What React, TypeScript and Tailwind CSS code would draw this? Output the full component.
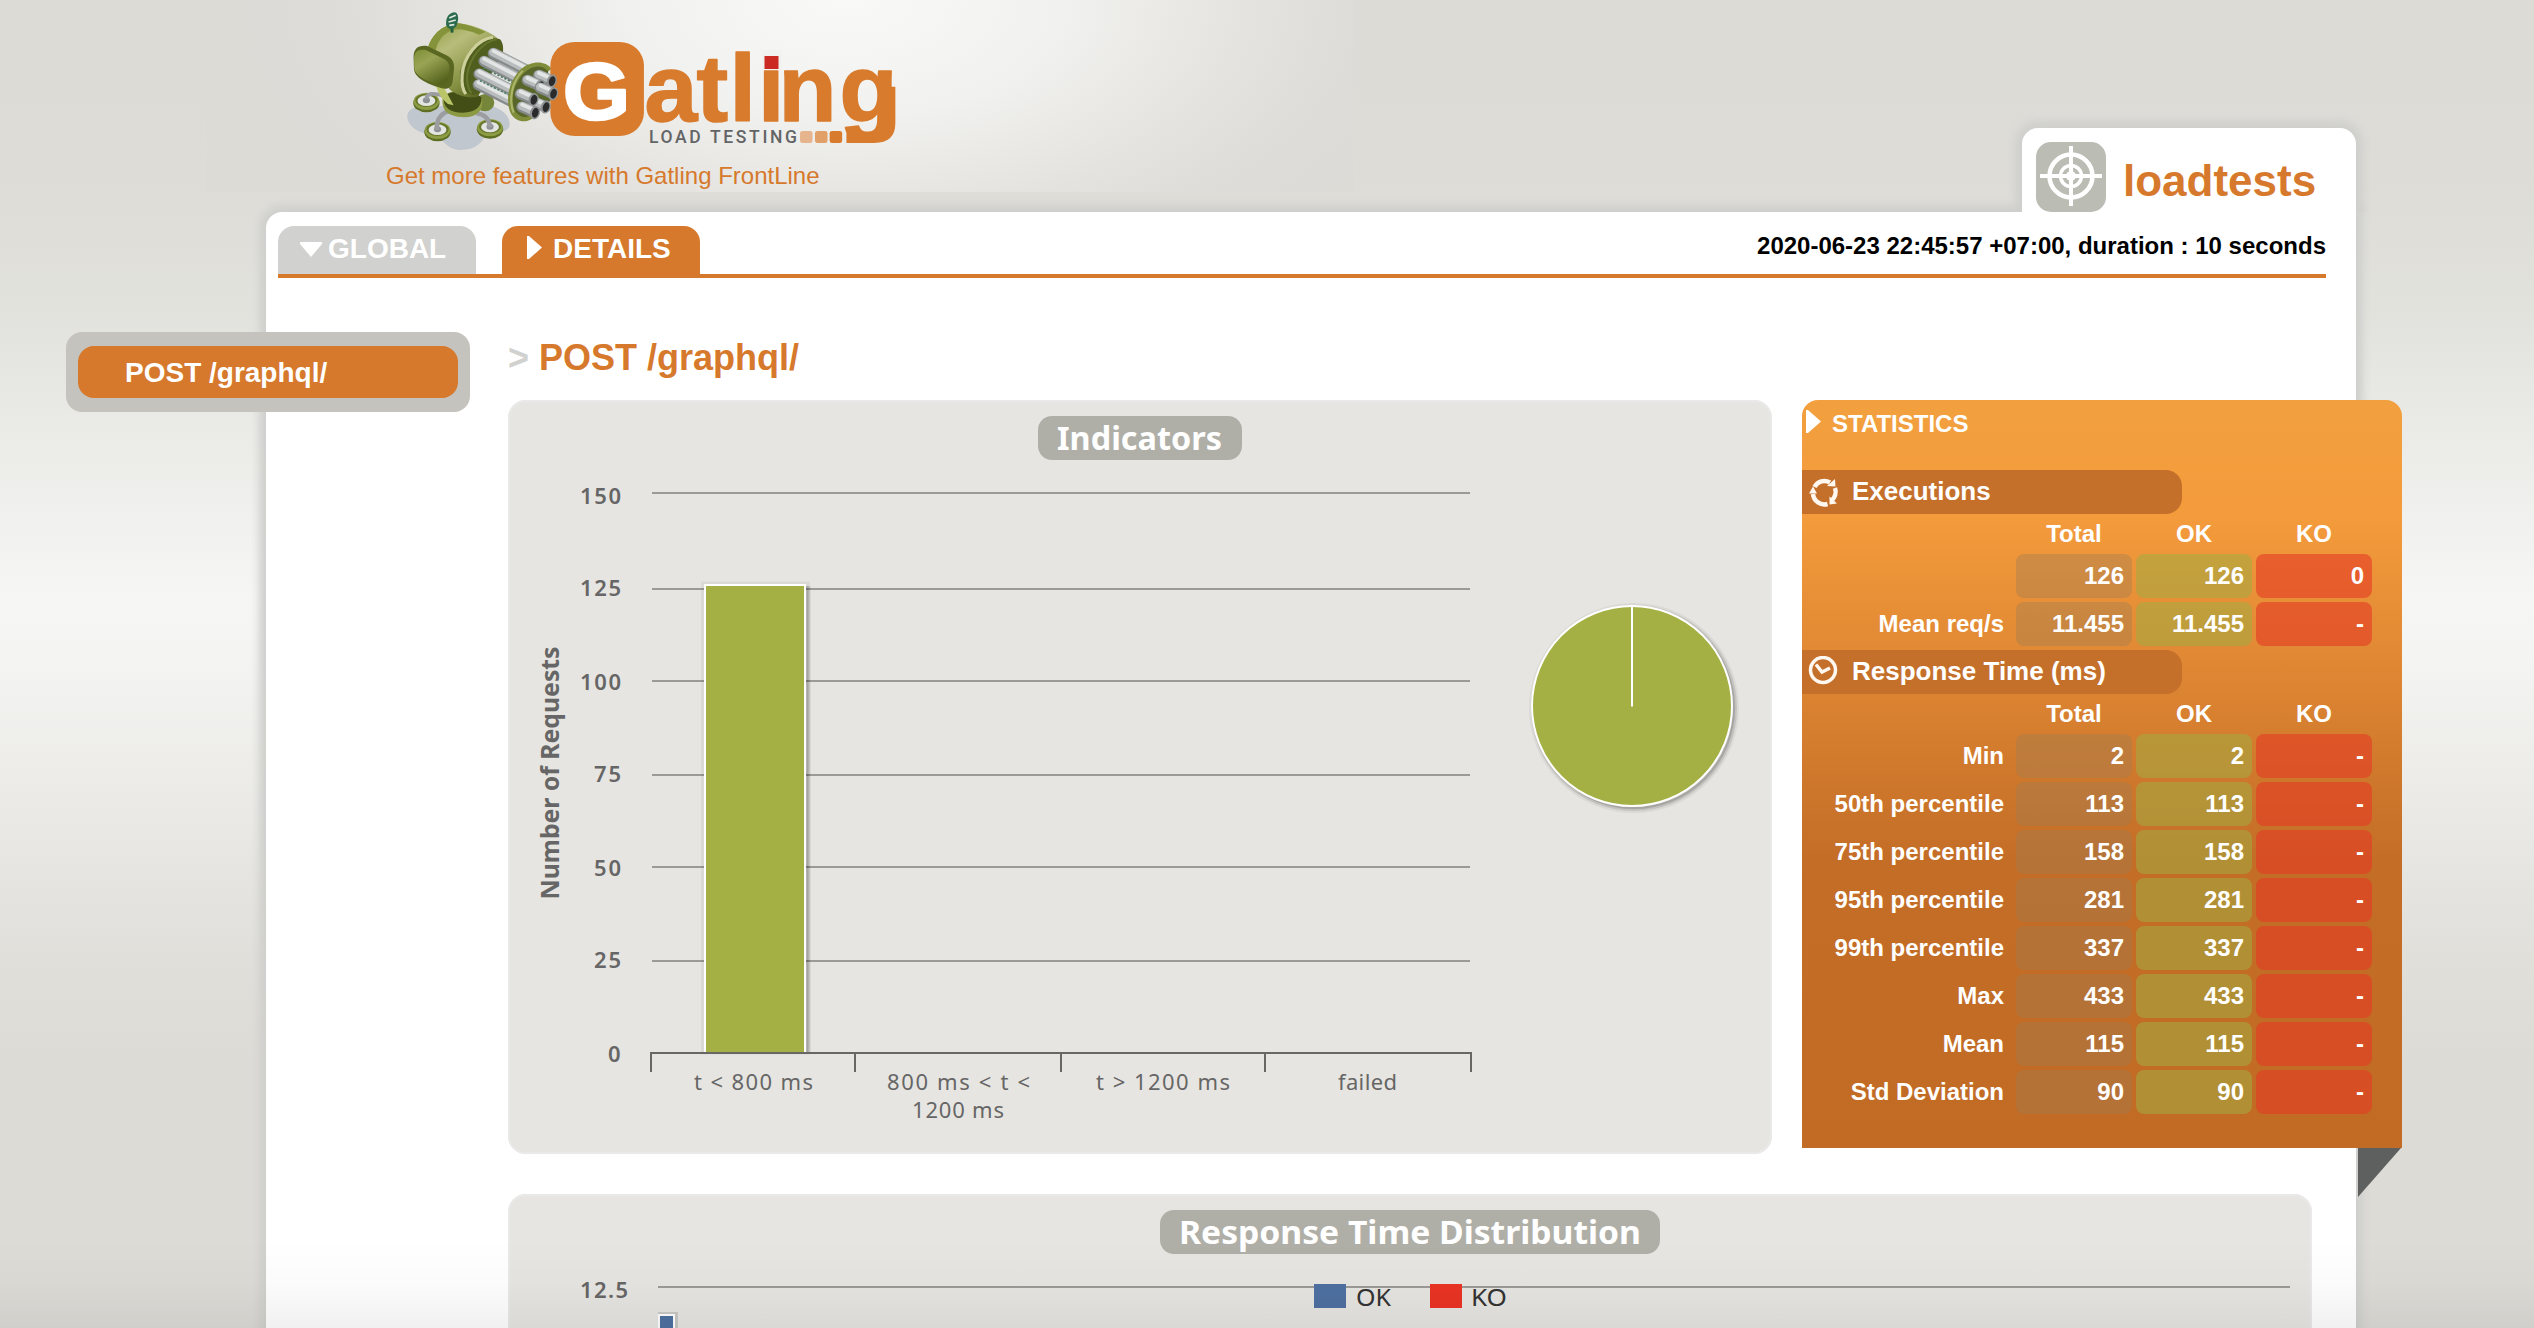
import React from "react";

type Row = { label: string; values: [string, string, string] };

const executions: Row[] = [
  { label: "", values: ["126", "126", "0"] },
  { label: "Mean req/s", values: ["11.455", "11.455", "-"] },
];

const responseTimes: Row[] = [
  { label: "Min", values: ["2", "2", "-"] },
  { label: "50th percentile", values: ["113", "113", "-"] },
  { label: "75th percentile", values: ["158", "158", "-"] },
  { label: "95th percentile", values: ["281", "281", "-"] },
  { label: "99th percentile", values: ["337", "337", "-"] },
  { label: "Max", values: ["433", "433", "-"] },
  { label: "Mean", values: ["115", "115", "-"] },
  { label: "Std Deviation", values: ["90", "90", "-"] },
];

function Foot({ x, y }: { x: number; y: number }) {
  return (
    <g>
      <ellipse cx={x} cy={y + 8} rx="37" ry="28" fill="#5e6f23" />
      <ellipse cx={x} cy={y + 3} rx="36" ry="26" fill="#8d9d45" />
      <ellipse cx={x} cy={y} rx="31" ry="20" fill="#66772a" />
      <ellipse cx={x} cy={y + 1} rx="25" ry="16" fill="#e3e5e2" />
      <ellipse cx={x} cy={y} rx="10" ry="9" fill="#8b9095" />
    </g>
  );
}

function Barrel({ x1, y1, x2, y2 }: { x1: number; y1: number; x2: number; y2: number }) {
  return (
    <g strokeLinecap="round">
      <line x1={x1} y1={y1} x2={x2} y2={y2} stroke="#858989" strokeWidth="33" />
      <line x1={x1} y1={y1 - 3} x2={x2} y2={y2 - 3} stroke="#b9bcbc" strokeWidth="25" />
      <line x1={x1} y1={y1 - 7} x2={x2} y2={y2 - 7} stroke="#e3e5e5" strokeWidth="11" />
    </g>
  );
}

function Muzzle({ x, y }: { x: number; y: number }) {
  return (
    <g>
      <Barrel x1={x - 36} y1={y - 17} x2={x - 4} y2={y - 2} />
      <ellipse cx={x} cy={y} rx="14" ry="20" fill="#8f9393" transform={`rotate(14 ${x} ${y})`} />
      <ellipse cx={x + 1} cy={y} rx="9" ry="15" fill="#2b2b2b" transform={`rotate(14 ${x} ${y})`} />
    </g>
  );
}

function GatlingLogo() {
  return (
    <svg className="block h-[156px] w-[560px]" viewBox="0 0 560 156">
      <defs>
        <linearGradient id="drum" x1="0" y1="0" x2="0.7" y2="1">
          <stop offset="0" stopColor="#8a9a3f" />
          <stop offset="0.35" stopColor="#b9bd7b" />
          <stop offset="0.75" stopColor="#838f40" />
          <stop offset="1" stopColor="#56621f" />
        </linearGradient>
        <linearGradient id="shield" x1="0" y1="0" x2="0.6" y2="1">
          <stop offset="0" stopColor="#7c8e36" />
          <stop offset="0.4" stopColor="#9aa454" />
          <stop offset="1" stopColor="#56641d" />
        </linearGradient>
      </defs>
      <g transform="scale(0.35714 0.33333)">
        <path d="M132 352C132 322 165 312 215 318L370 318C402 330 424 352 418 380C410 400 372 396 350 408C336 440 310 450 280 450C242 448 236 420 210 406C166 400 138 386 132 352Z" fill="#c1c7cf" />
        <ellipse cx="350" cy="308" rx="26" ry="26" fill="#75853a" />
        <Foot x={186} y={301} />
        <path d="M186 298C186 278 206 278 238 288" stroke="#9b9da0" strokeWidth="11" fill="none" />
        <Foot x={217} y={388} />
        <path d="M215 390C214 356 226 342 246 334" stroke="#9b9da0" strokeWidth="13" fill="none" />
        <Foot x={364} y={380} />
        <path d="M364 382C362 354 346 342 326 340" stroke="#9b9da0" strokeWidth="13" fill="none" />
        <path d="M232 292C226 330 244 350 290 352C330 350 346 332 342 296C320 270 250 262 232 292Z" fill="#8d9a44" />
        <path d="M234 290C232 322 252 338 288 338C322 338 342 320 340 292C316 272 256 266 234 290Z" fill="#434d16" />
        <path d="M190 145C198 112 226 72 276 70C330 76 372 100 392 122C404 142 396 166 380 190L330 290C304 296 276 290 250 268Z" fill="url(#drum)" />
        <path d="M190 145C198 112 226 72 276 70C300 74 330 84 352 96L334 104C310 94 290 88 272 88C240 92 220 116 212 150Z" fill="#85943a" />
        <path d="M392 118C350 104 300 138 282 210C274 250 286 280 318 286L340 276L400 160C402 140 400 128 392 118Z" fill="#515f1e" />
        <path d="M372 112C330 118 290 168 286 224C284 250 288 270 296 282" stroke="#ced09b" strokeWidth="9" fill="none" />
        <path d="M384 118C344 124 306 172 300 226C298 252 304 268 312 280" stroke="#66752b" strokeWidth="6" fill="none" />
        <path d="M212 255L236 264L262 316L246 312C226 294 218 276 212 255Z" fill="#bac468" />
        <path d="M150 170C150 146 164 134 188 138L242 166C260 176 265 190 263 210L259 246C256 264 244 270 226 264C184 250 151 232 151 204Z" fill="#596720" />
        <path d="M151 178C151 154 162 146 184 150L234 176C247 184 252 194 250 210L246 242C244 254 234 260 220 255C184 242 153 226 152 204Z" fill="url(#shield)" />
        <path d="M258 98L257 78" stroke="#22603e" strokeWidth="8" />
        <path d="M241 74C240 50 250 38 266 37C278 42 276 62 270 78C260 92 244 88 241 74Z" fill="#2b6b4b" />
        <path d="M250 54L268 46M248 66L268 60M250 76L264 74" stroke="#dfe8e0" strokeWidth="5" />
        <Barrel x1={374} y1={160} x2={468} y2={212} />
        <Barrel x1={348} y1={184} x2={450} y2={240} />
        <Barrel x1={334} y1={222} x2={434} y2={276} />
        <Barrel x1={332} y1={254} x2={430} y2={308} />
        <path d="M346 204L440 254M336 242L420 286" stroke="#4f7d68" strokeWidth="5" strokeDasharray="6 5" />
        <path d="M536 206C520 182 480 180 450 208C416 244 406 300 422 340C436 368 466 370 484 354L500 240Z" fill="#7f8d3a" />
        <path d="M526 212C508 192 480 196 458 220C428 256 420 300 434 334C448 356 470 356 488 340L536 300Z" fill="#59662a" />
        <path d="M456 212C424 246 416 300 430 338" stroke="#adb56b" strokeWidth="6" fill="none" />
        <rect x="533" y="126" width="262" height="282" rx="68" ry="70" fill="#d87b2d" />
        <Muzzle x={537} y={243} />
        <Muzzle x={505} y={258} />
        <Muzzle x={541} y={281} />
        <Muzzle x={520} y={321} />
        <Muzzle x={486} y={299} />
        <Muzzle x={490} y={338} />
        <rect x="1232" y="393" width="35" height="36" rx="7" fill="#e6b58e" />
        <rect x="1274" y="393" width="35" height="36" rx="7" fill="#e1a068" />
        <rect x="1315" y="393" width="35" height="36" rx="7" fill="#d87b2d" />
        <path d="M1362 412H1440C1470 412 1482 400 1482 370V260" stroke="#d87b2d" strokeWidth="34" fill="none" />
      </g>
      <text x="203" y="119" textLength="67" lengthAdjust="spacingAndGlyphs" fill="#ffffff" stroke="#ffffff" strokeWidth="2.500" strokeLinejoin="round" className="font-['Liberation_Sans'] text-[80px] font-bold">G</text>
      <text x="284.500 336.500 369.500 398 418.500 479.500" y="121" fill="#d87b2d" stroke="#d87b2d" strokeWidth="1.500" strokeLinejoin="round" className="font-['Liberation_Sans'] text-[95px] font-bold">atling</text>
      <rect x="402" y="50" width="19.500" height="19.500" fill="#f1f1ef" />
      <rect x="404.500" y="56" width="14" height="13" fill="#cb2a22" />
      <text x="289" y="143" textLength="148" lengthAdjust="spacing" fill="#636465" className="font-['Roboto'] text-[17.500px] font-medium">LOAD TESTING</text>
    </svg>
  );
}

function TargetIcon() {
  return (
    <svg className="size-[70px]" viewBox="0 0 70 70" fill="none" stroke="#ffffff">
      <rect width="70" height="70" rx="15" fill="#bbbcb4" stroke="none" />
      <circle cx="35" cy="34" r="21.500" strokeWidth="4.500" />
      <circle cx="35" cy="34" r="10.500" strokeWidth="3.500" />
      <path d="M35 4V64M4 34H66" strokeWidth="4" />
      <circle cx="35" cy="34" r="5" fill="#ffffff" stroke="none" />
    </svg>
  );
}

function CycleIcon() {
  return (
    <svg className="h-[32px] w-[32px]" viewBox="0 0 32 32" fill="none" stroke="#fff8f0" strokeWidth="4.500">
      <path d="M6.500 11A11 11 0 0 1 22 6.500" />
      <path d="M27 12A11.500 11.500 0 0 1 23.500 24.500" />
      <path d="M19.500 28A11.500 11.500 0 0 1 5 18" />
      <path d="M19 10L27.500 10.500L27 3Z" fill="#fff8f0" stroke="none" />
      <path d="M21.500 20.500L21.500 28.500L29 27.500Z" fill="#fff8f0" stroke="none" />
      <path d="M1 17.500L9 17.500L5 10.500Z" fill="#fff8f0" stroke="none" />
    </svg>
  );
}

function ClockIcon() {
  return (
    <svg className="h-[32px] w-[32px]" viewBox="0 0 32 32" fill="none" stroke="#fff8f0" strokeWidth="3.500">
      <circle cx="15" cy="14" r="12.500" />
      <path d="M8 8.500L14 16L22 12" />
    </svg>
  );
}

function SectionTitle({ icon, children }: { icon: React.ReactNode; children: React.ReactNode }) {
  return (
    <div className="flex h-[44px] w-[380px] items-center rounded-r-[16px] bg-[#c5702a] pl-[6px] text-[26px] leading-[42px]">
      {icon}
      <span className="-mt-0.5 ml-[12px]">{children}</span>
    </div>
  );
}

function StatsTable({ rows }: { rows: Row[] }) {
  return (
    <div className="flex flex-col gap-1 pb-1">
      <div className="-mb-1 flex h-[40px] gap-1 pl-[214px] text-center leading-[39px]">
        <span className="w-[116px]">Total</span>
        <span className="w-[116px]">OK</span>
        <span className="w-[116px]">KO</span>
      </div>
      {rows.map((row) => (
        <div key={row.label} className="flex h-[44px] gap-1 text-right leading-[44px]">
          <span className="w-[210px] pr-2">{row.label}</span>
          <span className="w-[116px] rounded-lg bg-[rgba(160,124,83,0.4)] pr-2">{row.values[0]}</span>
          <span className="w-[116px] rounded-lg bg-[rgba(164,170,65,0.57)] pr-2">{row.values[1]}</span>
          <span className="w-[116px] rounded-lg bg-[rgba(228,58,36,0.6)] pr-2">{row.values[2]}</span>
        </div>
      ))}
    </div>
  );
}

function Statistics() {
  return (
    <aside className="relative h-[748px] w-[600px] shrink-0 rounded-t-[16px] bg-[linear-gradient(180deg,#f2a03f_0px,#f49b3c_115px,#c36d27_460px,#c16b25_748px)] text-[24px] font-bold text-white">
      <div className="flex h-[70px] items-start pl-1 pt-[10px]">
        <svg className="h-[23px] w-[15px]" viewBox="0 0 15 23"><path d="M0 0H2L15 11.500L2 23H0Z" fill="#ffffff" /></svg>
        <span className="ml-[11px] leading-[28px]">STATISTICS</span>
      </div>
      <SectionTitle icon={<CycleIcon />}>Executions</SectionTitle>
      <StatsTable rows={executions} />
      <SectionTitle icon={<ClockIcon />}>Response Time (ms)</SectionTitle>
      <StatsTable rows={responseTimes} />
      <svg className="absolute left-[556px] top-[748px] h-[49px] w-[44px]" viewBox="0 0 44 49"><path d="M0 0H43L0 49Z" fill="#5d605f" /></svg>
    </aside>
  );
}

const gridLines = [
  { y: 93, base: 103.5, x: 72, w: 41, label: "150" },
  { y: 189, base: 195.500, x: 72, w: 41, label: "125" },
  { y: 281, base: 289.500, x: 72, w: 41, label: "100" },
  { y: 375, base: 381.500, x: 86, w: 27, label: "75" },
  { y: 467, base: 475.5, x: 86, w: 27, label: "50" },
  { y: 561, base: 567.500, x: 86, w: 27, label: "25" },
];

const categories = [
  { x: 186, w: 119, y: 690, label: "t < 800 ms" },
  { x: 379, w: 143, y: 690, label: "800 ms < t <" },
  { x: 404, w: 92, y: 718, label: "1200 ms" },
  { x: 588, w: 134, y: 690, label: "t > 1200 ms" },
  { x: 830, w: 59, y: 690, label: "failed" },
];

function IndicatorsChart() {
  return (
    <svg className="block h-[754px] w-[1264px] font-['Noto_Sans'] text-[22px]" viewBox="0 0 1264 754" fill="#666666">
      {gridLines.map((g) => (
        <g key={g.label}>
          <rect x="144" y={g.y - 1} width="818" height="2" fill="#9b9a99" />
          <text x={g.x} y={g.base} textLength={g.w} lengthAdjust="spacing" className="font-semibold">{g.label}</text>
        </g>
      ))}
      <text x="100" y="661.500" className="font-semibold">0</text>
      <rect x="195.500" y="184" width="104" height="468" fill="none" stroke="#000000" strokeOpacity="0.05" strokeWidth="5" />
      <path d="M299.500 186V652" stroke="#000000" strokeOpacity="0.1" strokeWidth="6" />
      <path d="M299.500 186V652" stroke="#000000" strokeOpacity="0.15" strokeWidth="2" />
      <rect x="196" y="184" width="102" height="468" fill="#ffffff" />
      <rect x="198" y="186" width="98" height="466" fill="#a4b043" />
      <path d="M142 653H964" stroke="#686766" strokeWidth="2" />
      <path d="M143 652V672M347 654V672M553 654V672M757 654V672M963 652V672" stroke="#686766" strokeWidth="2" />
      {categories.map((c) => (
        <text key={c.label} x={c.x} y={c.y} textLength={c.w} lengthAdjust="spacing">{c.label}</text>
      ))}
      <text transform="translate(50.500 499.500) rotate(-90)" textLength="253" lengthAdjust="spacingAndGlyphs" className="text-[25px] font-bold">Number of Requests</text>
      <g fill="none" stroke="#000000">
        <circle cx="1126" cy="308" r="100" strokeOpacity="0.05" strokeWidth="10" />
        <circle cx="1126" cy="308" r="100" strokeOpacity="0.1" strokeWidth="6" />
        <circle cx="1126" cy="308" r="100" strokeOpacity="0.15" strokeWidth="2" />
      </g>
      <circle cx="1124" cy="306" r="100" fill="#a4b043" stroke="#ffffff" strokeWidth="2" />
      <path d="M1124 206V306.500" stroke="#ffffff" strokeWidth="2" />
    </svg>
  );
}

function DistributionChart() {
  return (
    <svg className="block h-[134px] w-[1804px] font-['Noto_Sans'] text-[24px]" viewBox="0 0 1804 134">
      <rect x="150" y="92" width="1632" height="2" fill="#9b9a99" />
      <text x="72" y="104" fill="#666666" textLength="48" lengthAdjust="spacing" className="text-[22px] font-semibold">12.5</text>
      <rect x="150" y="118" width="20" height="16" fill="#c9c8c4" />
      <rect x="150" y="120" width="17" height="14" fill="#ffffff" />
      <rect x="152" y="122" width="13" height="12" fill="#4e70a1" />
      <rect x="806" y="90" width="32" height="24" fill="#4e70a1" />
      <text x="848" y="112" fill="#333333" textLength="35" lengthAdjust="spacingAndGlyphs">OK</text>
      <rect x="922" y="90" width="32" height="24" fill="#ea3323" />
      <text x="963" y="112" fill="#333333" textLength="36" lengthAdjust="spacingAndGlyphs">KO</text>
    </svg>
  );
}

function ChartPanel({ badge, title, children }: { badge: string; title: React.ReactNode; children: React.ReactNode }) {
  return (
    <section className="relative rounded-[18px] bg-[#e6e5e1] shadow-[inset_0_0_0_2px_#e9e9e9]">
      {children}
      <div className={`absolute inset-x-0 top-[16px] mx-auto h-[44px] rounded-[14px] bg-[#b0afa7] ${badge}`}>
        {title}
      </div>
    </section>
  );
}

export default function App() {
  return (
    <div className="relative h-[1328px] w-[2534px] overflow-hidden bg-[linear-gradient(180deg,#dcdbd6_0px,#dddcd7_180px,#e2e2dd_310px,#f6f6f5_600px,#f4f4f2_660px,#e0dfda_960px,#dcdbd6_1060px)] font-['Liberation_Sans',sans-serif]">
      <header className="flex h-[212px] justify-between pl-[206px] pr-[178px]">
        <div className="h-[192px] w-[1148px] bg-[radial-gradient(ellipse_620px_330px_at_640px_0px,#f9f9f8_0%,#f1f1ef_35%,#e4e3df_65%,#dddcd8_83%,#dcdbd6_100%)] pl-[154px]">
          <GatlingLogo />
          <a className="ml-[26px] block text-[24px] leading-[39px] text-[#d6792c]">Get more features with Gatling FrontLine</a>
        </div>
        <div className="relative z-10 flex h-[84px] w-[334px] self-end rounded-t-[16px] bg-white pl-[14px] pt-[14px] shadow-[0_0_8px_7px_#cfcfcd] [clip-path:inset(-20px_-20px_0_-20px)]">
          <TargetIcon />
          <span className="ml-[17px] text-[44px] font-bold leading-[78px] text-[#d6792c]">loadtests</span>
        </div>
      </header>

      <main className="ml-[266px] h-[1140px] w-[2090px] rounded-tl-[16px] bg-white shadow-[0_0_8px_7px_#cfcfcd]">
        <nav className="ml-3 flex h-[66px] w-[2048px] items-end border-b-4 border-[#d6792c] font-bold text-white">
          <div className="flex h-[48px] w-[198px] rounded-t-[16px] bg-[#d1d1cf] pl-[21px] text-[28px] leading-[45px]">
            <svg className="mt-[16px] h-[15px] w-[24px]" viewBox="0 0 24 15"><path d="M1 0H23V2L12 15L1 2Z" fill="#ffffff" /></svg>
            <span className="ml-[5px]">GLOBAL</span>
          </div>
          <div className="ml-[26px] flex h-[48px] w-[198px] rounded-t-[16px] bg-[#d6792c] pl-[25px] text-[28px] leading-[45px]">
            <svg className="mt-[10px] h-[23px] w-[15px]" viewBox="0 0 15 23"><path d="M0 0H2L15 11.500L2 23H0Z" fill="#ffffff" /></svg>
            <span className="ml-[11px]">DETAILS</span>
          </div>
          <p className="ml-auto pb-[12px] text-[24px] leading-[32px] text-black">2020-06-23 22:45:57 +07:00, duration : 10 seconds</p>
        </nav>

        <div className="flex">
          <div className="-ml-[200px] mt-[54px] h-[80px] w-[404px] shrink-0 rounded-[16px] bg-[#c4c3bd] px-[12px] py-[14px]">
            <div className="h-[52px] rounded-[16px] bg-[#d6792c] pl-[47px] text-[28px] font-bold leading-[53px] text-white">POST /graphql/</div>
          </div>
          <div className="ml-[38px] w-[1804px] shrink-0">
            <h1 className="h-[122px] pt-[59px] text-[36px] font-bold leading-[41px] text-[#d6792c]">
              <span className="text-[#d1d1cf]">&gt;</span> POST /graphql/
            </h1>
            <div className="flex gap-[30px]">
              <ChartPanel
                badge="w-[204px]"
                title={
                  <svg className="block h-[44px] w-[204px]" viewBox="0 0 204 44">
                    <text x="19" y="34" textLength="165" lengthAdjust="spacingAndGlyphs" fill="#ffffff" className="font-['Noto_Sans'] text-[32px] font-bold">Indicators</text>
                  </svg>
                }
              >
                <IndicatorsChart />
              </ChartPanel>
              <Statistics />
            </div>
            <div className="mt-[40px]">
              <ChartPanel
                badge="w-[500px]"
                title={
                  <svg className="block h-[44px] w-[500px]" viewBox="0 0 500 44">
                    <text x="19" y="34" textLength="462" lengthAdjust="spacingAndGlyphs" fill="#ffffff" className="font-['Noto_Sans'] text-[32px] font-bold">Response Time Distribution</text>
                  </svg>
                }
              >
                <DistributionChart />
                <div className="h-[60px]" />
              </ChartPanel>
            </div>
          </div>
        </div>
      </main>
      <div className="pointer-events-none absolute inset-x-0 bottom-0 h-[90px] bg-[linear-gradient(180deg,rgba(0,0,0,0)_0%,rgba(0,0,0,0.015)_50%,rgba(0,0,0,0.055)_100%)]" />
    </div>
  );
}
